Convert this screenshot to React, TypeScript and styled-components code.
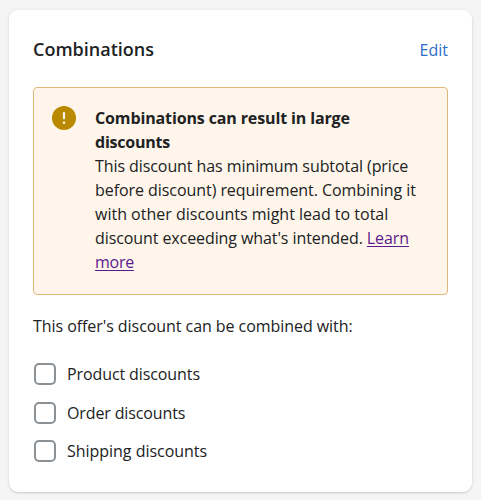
import React from 'react';
import styled, { createGlobalStyle } from 'styled-components';

const GlobalStyle = createGlobalStyle`
  * { box-sizing: border-box; }
  body {
    margin: 0; height: 500px; overflow: hidden; background: #f5f5f5; color: #202223;
    font: 16px/24px "Open Sans", "Noto Sans", sans-serif;
  }
`;
const Card = styled.section`
  width: 463px; height: 482px; margin: 10px 0 0 9px; padding: 27px 24px 0;
  background: #fff; border-radius: 9px;
  box-shadow: 0 0 5px rgba(23, 24, 24, 0.05), 0 1px 2px rgba(0, 0, 0, 0.15);
`;
const Header = styled.header`
  display: flex; justify-content: space-between; align-items: center; height: 24px;
`;
const Title = styled.h2`
  margin: 0; font-size: 18px; line-height: 24px; font-weight: 600; white-space: nowrap;
`;
const EditButton = styled.button`
  padding: 1px 0 0; border: 0; background: none; color: #2c6ecb; font: inherit; cursor: pointer;
`;
const Banner = styled.div`
  display: flex; gap: 18px; height: 208px; margin-top: 26px; padding: 18px;
  background: #fff5ea; border: 1px solid #e1b878; border-radius: 4px;
`;
const AlertIcon = styled.svg`flex: none; width: 25px; height: 24px;`;
const BannerText = styled.div`min-width: 0;`;
const Line = styled.span<{ $spacing?: number; $bold?: boolean }>`
  display: block; width: max-content; white-space: nowrap;
  font-weight: ${p => (p.$bold ? 700 : 400)};
  letter-spacing: ${p => p.$spacing ?? 0}px;
`;
const Link = styled.a`
  color: #5c1a8b; text-decoration: underline; text-underline-offset: 2px; text-decoration-thickness: 1px;
`;
const Intro = styled.div`margin-top: 19px;`;
const Options = styled.div`display: grid; grid-auto-rows: 38.4px; margin-top: 17px;`;
const Option = styled.label`display: flex; align-items: center; gap: 11px; padding-left: 1px;`;
const Checkbox = styled.input`
  appearance: none; flex: none; width: 22px; height: 22px; margin: 0;
  border: 2px solid #8c9196; border-radius: 5px; background: #fff;
`;

const options = [
  { label: 'Product discounts', spacing: -0.1 },
  { label: 'Order discounts', spacing: -0.13 },
  { label: 'Shipping discounts', spacing: -0.03 },
];

export default function App() {
  return (
    <>
      <GlobalStyle />
      <Card>
        <Header>
          <Title>Combinations</Title>
          <EditButton>Edit</EditButton>
        </Header>
        <Banner>
          <AlertIcon viewBox="0 0 25 24">
            <circle cx="12" cy="12" r="12" fill="#b98900" />
            <path d="M12 7v5.2" stroke="#fff5ea" strokeWidth="2.2" strokeLinecap="round" />
            <circle cx="12" cy="16.8" r="1.25" fill="#fff5ea" />
          </AlertIcon>
          <BannerText>
            <Line $bold $spacing={-0.13}>Combinations can result in large</Line>
            <Line $bold $spacing={-0.22}>discounts</Line>
            <Line $spacing={-0.08}>This discount has minimum subtotal (price</Line>
            <Line $spacing={-0.06}>before discount) requirement. Combining it</Line>
            <Line>with other discounts might lead to total</Line>
            <Line $spacing={-0.09}>discount exceeding what's intended. <Link href="#">Learn</Link></Line>
            <Line $spacing={-0.25}><Link href="#">more</Link></Line>
          </BannerText>
        </Banner>
        <Intro><Line $spacing={-0.06}>This offer's discount can be combined with:</Line></Intro>
        <Options>
          {options.map(o => (
            <Option key={o.label}>
              <Checkbox type="checkbox" />
              <Line $spacing={o.spacing}>{o.label}</Line>
            </Option>
          ))}
        </Options>
      </Card>
    </>
  );
}
